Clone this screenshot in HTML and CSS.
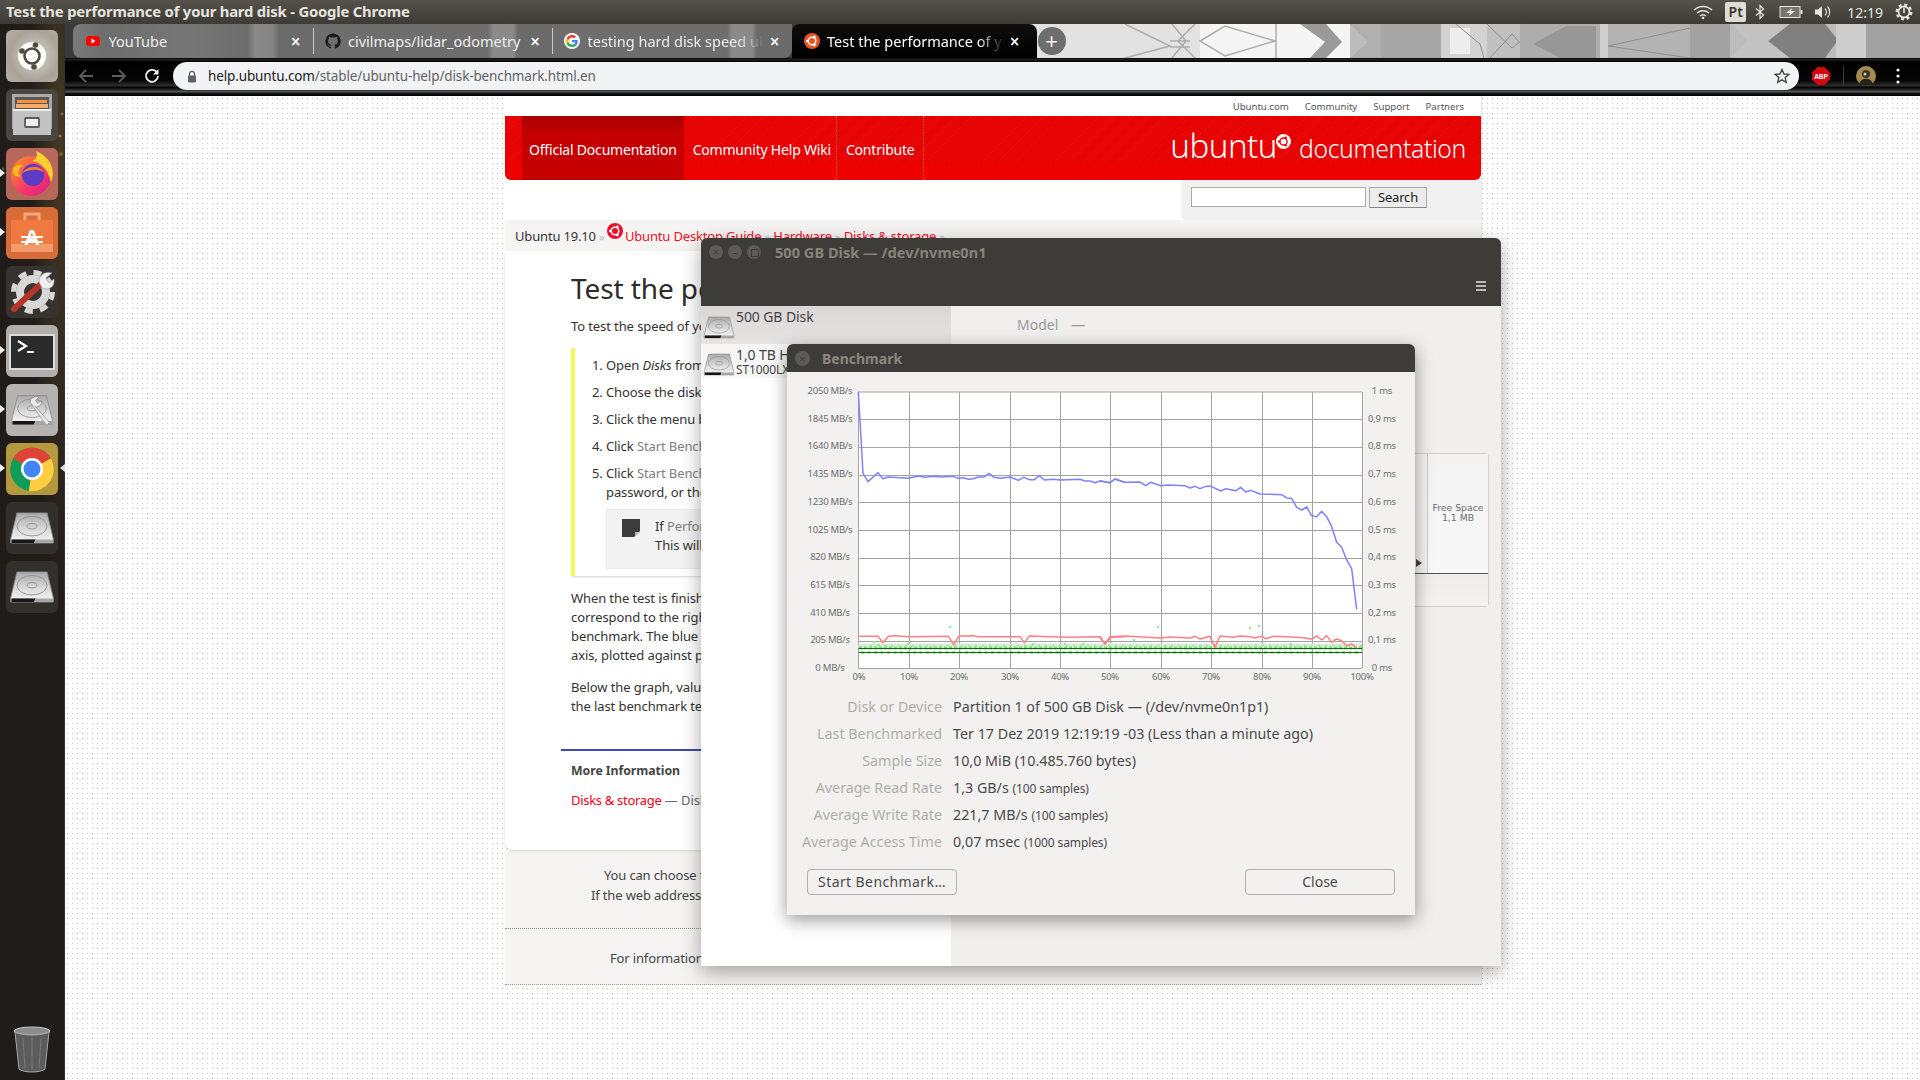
FILE: index.html
```
<!DOCTYPE html>
<html lang="en">
<head>
<meta charset="utf-8">
<title>Test the performance of your hard disk</title>
<link rel="stylesheet" href="styles.css">
</head>
<body>
<svg class="defs" width="0" height="0" aria-hidden="true">
  <defs>
    <linearGradient id="hddTop" x1="0" y1="0" x2="0" y2="1"><stop offset="0" stop-color="#a9a9a9"/><stop offset=".6" stop-color="#dedede"/><stop offset="1" stop-color="#f6f6f6"/></linearGradient>
    <linearGradient id="ffg" x1="0" y1="0" x2="1" y2="1"><stop offset="0" stop-color="#ff9a1f"/><stop offset=".6" stop-color="#f5366a"/><stop offset="1" stop-color="#d81b8c"/></linearGradient>
    <symbol id="hdd" viewBox="0 0 52 40">
      <path d="M9 3H43L50 32V37H2V32Z" fill="url(#hddTop)" stroke="#8a8a8a" stroke-width="1"/>
      <ellipse cx="26" cy="18" rx="17" ry="11" fill="none" stroke="#8f8f8f" stroke-width="1"/>
      <ellipse cx="26" cy="18" rx="5.500" ry="3" fill="none" stroke="#8f8f8f" stroke-width="1"/>
      <path d="M2 33H50V37H2Z" fill="#a6a6a6"/>
      <path d="M3 33H30L28 37H3Z" fill="#161616"/>
    </symbol>
    <symbol id="ubu" viewBox="0 0 52 52">
      <circle cx="26" cy="26" r="14" fill="#fbfbfa"/>
      <circle cx="26" cy="26" r="7.500" fill="none" stroke="#4f4a42" stroke-width="2.600"/>
      <g fill="#4f4a42"><circle cx="16" cy="21" r="2.800"/><circle cx="29.500" cy="15" r="2.800"/><circle cx="28" cy="37" r="2.800"/></g>
    </symbol>
  </defs>
</svg>
<div class="desktop">
  <header class="topbar">
    <span class="win-title">Test the performance of your hard disk - Google Chrome</span>
    <div class="tray">
      <svg class="t-wifi" width="20" height="16" viewBox="0 0 20 16"><g fill="none" stroke="#e6e4df" stroke-width="1.5"><path d="M1 6a13 13 0 0 1 18 0"/><path d="M4 9a9 9 0 0 1 12 0"/><path d="M7 12a4.5 4.5 0 0 1 6 0"/></g><circle cx="10" cy="14" r="1.3" fill="#e6e4df"/></svg>
      <span class="t-lang">Pt</span>
      <svg class="t-bt" width="10" height="16" viewBox="0 0 10 16"><path d="M1 4.500 8.500 11 5 14.500V1.500L8.500 5 1 11.500" fill="none" stroke="#e6e4df" stroke-width="1.200"/></svg>
      <svg class="t-bat" width="24" height="14" viewBox="0 0 24 14"><rect x="1" y="1.500" width="20" height="11" fill="#77746d" stroke="#e6e4df"/><rect x="21.500" y="5" width="2" height="4" fill="#e6e4df"/><path d="M13 3 7 8h4l-1 3 6-5h-4z" fill="#e6e4df"/></svg>
      <svg class="t-vol" width="18" height="16" viewBox="0 0 18 16"><path d="M1 5.500h3L8 2v12L4 10.500H1z" fill="#e6e4df"/><path d="M11 4.500a5 5 0 0 1 0 7M13.500 2.500a8 8 0 0 1 0 11" fill="none" stroke="#e6e4df" stroke-width="1.100"/></svg>
      <span class="t-clock">12:19</span>
      <svg class="t-gear" width="18" height="18" viewBox="0 0 18 18"><circle cx="9" cy="9" r="5.500" fill="none" stroke="#e6e4df" stroke-width="1.800"/><circle cx="9" cy="9" r="7.300" fill="none" stroke="#e6e4df" stroke-width="2.400" stroke-dasharray="3 2.730"/><path d="M9 5v5" stroke="#e6e4df" stroke-width="1.600"/></svg>
    </div>
  </header>

  <div class="workspace">
    <nav class="launcher">
      <div class="tile tile-dash"><svg width="52" height="52"><use href="#ubu"/></svg></div>
      <div class="tile tile-files"><svg width="52" height="52" viewBox="0 0 52 52"><path d="M6 5H46V40H6Z" fill="#a9a9a9"/><path d="M9 8H43V21H9Z" fill="#5d5750"/><path d="M11 11H41V14H11Z" fill="#f0923f"/><path d="M10 15H42V19H10Z" fill="#f2ab73"/><path d="M7 20H45V46H7Z" fill="#c2c2c2"/><path d="M7 20H45V22H7Z" fill="#efefef"/><rect x="19" y="29" width="14" height="9" rx="1" fill="#efefef" stroke="#5a5a5a" stroke-width="1.800"/></svg></div>
      <div class="tile tile-ff has-arrow"><svg width="52" height="52" viewBox="0 0 52 52"><circle cx="25" cy="28" r="20" fill="url(#ffg)"/><path d="M30 3C45 9 50 24 45 34 42 22 35 14 26 13 31 11 32 7 30 3Z" fill="#ffcf2e"/><path d="M7 21C10 16 14 16 18 18 12 19 11 25 15 29 8 29 6 25 7 21Z" fill="#ffb81f"/><circle cx="27" cy="27" r="11" fill="#5b3bc4"/><path d="M16 25C20 19 32 15 38 24 30 20 22 22 16 25Z" fill="#ff7a2b"/></svg></div>
      <div class="tile tile-soft has-arrow"><svg width="52" height="52" viewBox="0 0 52 52"><path d="M19 13V7H33V13" fill="none" stroke="#f6a77c" stroke-width="3"/><path d="M5 13H47V45H5Z" fill="#ee7a3f"/><path d="M5 37H47V45H5Z" fill="#f29a6a"/><text class="soft-a" x="26" y="38" text-anchor="middle">A</text><path d="M15 29H37V31H15ZM15 34H37V36H15Z" fill="#fff"/></svg></div>
      <div class="tile tile-tools"><svg width="52" height="52" viewBox="0 0 52 52"><circle cx="27" cy="26" r="13" fill="none" stroke="#d8d8d8" stroke-width="8"/><circle cx="27" cy="26" r="19.500" fill="none" stroke="#d8d8d8" stroke-width="5" stroke-dasharray="8 7.300"/><path d="M8 43 36 17" stroke="#b5352a" stroke-width="6" stroke-linecap="round"/><path d="M33 16C33 8 40 5 46 7L40 12 43 17 48 13C49 20 44 25 36 22Z" fill="#efefef" stroke="#999" stroke-width=".6"/></svg></div>
      <div class="tile tile-term has-arrow"><svg width="52" height="52" viewBox="0 0 52 52"><rect x="4" y="10" width="44" height="34" fill="#2a2a2a" stroke="#dcdcdc" stroke-width="2"/><path d="M12 16 20 21 12 26" fill="none" stroke="#fff" stroke-width="2.200"/><path d="M21 27H28" stroke="#fff" stroke-width="2"/></svg></div>
      <div class="tile tile-disks has-arrow"><svg width="44" height="36" viewBox="0 0 52 40"><use href="#hdd"/><path d="M24 11C23 6 30 3 34 5L30 9 33 12 37 9C38 14 34 17 30 16L47 35 43 38Z" fill="#e9e9e9" stroke="#777" stroke-width=".7"/></svg></div>
      <div class="tile tile-chrome has-arrow arrow-right"><svg width="52" height="52" viewBox="0 0 52 52"><path d="M26 26 7 15.500A22 22 0 0 1 45 15.500Z" fill="#db4437"/><path d="M26 26 7 15.500A22 22 0 0 0 23 48Z" fill="#0f9d58"/><path d="M26 26 45 15.500A22 22 0 0 1 23 48Z" fill="#ffcd40"/><circle cx="26" cy="26" r="11" fill="#fff"/><circle cx="26" cy="26" r="8.500" fill="#4285f4"/></svg></div>
      <div class="tile tile-hdd"><svg width="46" height="36" viewBox="0 0 52 40"><use href="#hdd"/></svg></div>
      <div class="tile tile-hdd"><svg width="46" height="36" viewBox="0 0 52 40"><use href="#hdd"/></svg></div>
      <div class="tile tile-trash"><svg width="46" height="50" viewBox="0 0 46 50"><ellipse cx="23" cy="7" rx="18" ry="4" fill="#8d8d8d" stroke="#ccc"/><path d="M6 8 10 45C14 49 32 49 36 45L40 8C34 12 12 12 6 8Z" fill="#5c5c5c" stroke="#a8a8a8"/><path d="M14 14 16 44M23 14V45M32 14 30 44" stroke="#7c7c7c"/></svg></div>
    </nav>

    <main class="browser">
      <div class="tabstrip">
        <svg class="strip-art" width="1855" height="34" viewBox="65 24 1855 34" aria-hidden="true">
          <rect x="1000" y="24" width="920" height="34" fill="#bcbcbc"/>
          <rect x="1000" y="24" width="200" height="34" fill="#e2e2e2"/>
          <rect x="1200" y="24" width="150" height="34" fill="#f5f5f5"/>
          <g fill="none" stroke="#adadad" stroke-width="1.500">
            <path d="M1125 24 1170 46 1125 58M1170 41H1190M1170 47H1190M1195 24 1178 41 1195 58M1172 24 1186 41 1172 58"/>
            <path d="M1200 41 1225 26 1275 41 1225 56ZM1276 24V58"/>
          </g>
          <path d="M1300 24H1326L1342 42 1326 58H1310L1325 42Z" fill="#9a9a9a"/>
          <path d="M1350 24H1381V58H1350L1368 42Z" fill="#b0b0b0"/>
          <rect x="1381" y="24" width="60" height="34" fill="#a6a6a6"/>
          <rect x="1441" y="24" width="46" height="34" fill="#d2d2d2"/>
          <rect x="1450" y="28" width="20" height="26" fill="#ededed"/>
          <rect x="1487" y="24" width="33" height="34" fill="#c0c0c0"/>
          <g fill="none" stroke="#8f8f8f" stroke-width="1"><path d="M1456 24 1480 44 1484 58M1487 24 1512 48 1530 34M1490 58 1512 34 1530 54"/></g>
          <rect x="1520" y="24" width="80" height="34" fill="#adadad"/>
          <path d="M1533 44 1566 26H1596V58H1560Z" fill="#979797"/>
          <rect x="1600" y="24" width="8" height="34" fill="#cfcfcf"/>
          <rect x="1608" y="24" width="82" height="34" fill="#b2b2b2"/>
          <path d="M1608 46 1690 28M1608 46 1690 58" fill="none" stroke="#8f8f8f" stroke-width="1"/>
          <rect x="1690" y="24" width="40" height="34" fill="#a2a2a2"/>
          <path d="M1730 24H1790L1768 41 1790 58H1730L1748 41Z" fill="#c2c2c2"/>
          <path d="M1790 24H1825L1838 40 1825 58H1790L1768 41Z" fill="#808080"/>
          <rect x="1836" y="24" width="30" height="34" fill="#cdcdcd"/>
          <rect x="1866" y="24" width="54" height="34" fill="#a2a2a2"/>
        </svg>
        <div class="tab">
          <svg class="favicon" width="16" height="16" viewBox="0 0 16 16"><rect x="1" y="3" width="14" height="10" rx="3" fill="#f00"/><path d="M6.500 5.500 10.500 8 6.500 10.500Z" fill="#fff"/></svg>
          <span class="tab-title">YouTube</span><span class="tab-x">×</span>
        </div>
        <div class="tab tab-sep">
          <svg class="favicon" width="16" height="16" viewBox="0 0 16 16"><path d="M8 .5A7.700 7.700 0 0 0 5.600 15.500c.4.100.5-.2.500-.4V13.700C4 14.200 3.500 12.800 3.500 12.800 3.100 11.900 2.600 11.700 2.600 11.700 1.900 11.200 2.700 11.200 2.700 11.200 3.500 11.300 3.900 12 3.900 12 4.600 13.200 5.700 12.900 6.100 12.700 6.200 12.200 6.400 11.900 6.600 11.700 4.900 11.500 3.100 10.900 3.100 7.900 3.100 7 3.400 6.300 3.900 5.800 3.800 5.600 3.600 4.800 4 3.700 4 3.700 4.700 3.500 6.100 4.500A7.400 7.400 0 0 1 9.900 4.500C11.400 3.500 12 3.700 12 3.700 12.400 4.800 12.200 5.600 12.100 5.800 12.600 6.300 12.900 7 12.900 7.900 12.900 10.900 11.100 11.500 9.400 11.700 9.700 11.900 9.900 12.400 9.900 13.100V15.100C9.900 15.300 10 15.600 10.500 15.500A7.700 7.700 0 0 0 8 .5Z" fill="#1b1b1b"/></svg>
          <span class="tab-title">civilmaps/lidar_odometry</span><span class="tab-x">×</span>
        </div>
        <div class="tab tab-sep tab-last">
          <svg class="favicon" width="16" height="16" viewBox="0 0 16 16"><circle cx="8" cy="8" r="8" fill="#fff"/><path d="M13.800 8.200c0-.5 0-.9-.1-1.300H8v2.400h3.300c-.1.800-.6 1.400-1.200 1.900v1.500h2c1.100-1.100 1.700-2.600 1.700-4.500Z" fill="#4285f4"/><path d="M8 14c1.600 0 3-.5 4-1.500l-2-1.500c-.5.400-1.200.6-2 .6-1.600 0-2.900-1-3.300-2.400H2.600v1.600A6 6 0 0 0 8 14Z" fill="#34a853"/><path d="M4.700 9.200a3.600 3.600 0 0 1 0-2.400V5.200H2.600a6 6 0 0 0 0 5.600Z" fill="#fbbc05"/><path d="M8 4.400c.9 0 1.700.3 2.300.9l1.800-1.800A6 6 0 0 0 2.600 5.200l2.100 1.600C5.100 5.400 6.400 4.400 8 4.400Z" fill="#ea4335"/></svg>
          <span class="tab-title tab-fade">testing hard disk speed ubuntu</span><span class="tab-x">×</span>
        </div>
        <div class="tab tab-active">
          <svg class="favicon" width="16" height="16" viewBox="0 0 16 16"><circle cx="8" cy="8" r="8" fill="#e95420"/><circle cx="8" cy="8" r="3.800" fill="none" stroke="#fff" stroke-width="1.500"/><g fill="#fff"><circle cx="3.300" cy="8" r="1.300"/><circle cx="10.400" cy="3.900" r="1.300"/><circle cx="10.400" cy="12.100" r="1.300"/></g></svg>
          <span class="tab-title tab-fade">Test the performance of your hard disk</span><span class="tab-x">×</span>
        </div>
        <span class="newtab">+</span>
      </div>

      <div class="toolbar">
        <div class="navbtns">
          <svg width="16" height="16" viewBox="0 0 16 16"><path d="M15 8H2M8 2 2 8l6 6" fill="none" stroke="#5c5c5c" stroke-width="1.800"/></svg>
          <svg width="16" height="16" viewBox="0 0 16 16"><path d="M1 8H14M8 2l6 6-6 6" fill="none" stroke="#5c5c5c" stroke-width="1.800"/></svg>
          <svg width="16" height="16" viewBox="0 0 16 16"><path d="M13.300 5A6 6 0 1 0 14 8" fill="none" stroke="#f2f2f2" stroke-width="1.800"/><path d="M14.500 1V6.500H9Z" fill="#f2f2f2"/></svg>
        </div>
        <div class="omnibox">
          <svg width="10" height="13" viewBox="0 0 10 13"><path d="M2.500 6V3.800a2.500 2.500 0 0 1 5 0V6" fill="none" stroke="#5f6368" stroke-width="1.300"/><rect x="1" y="5.500" width="8" height="7" rx="1" fill="#5f6368"/></svg>
          <span class="url"><b>help.ubuntu.com</b>/stable/ubuntu-help/disk-benchmark.html.en</span>
          <svg class="star" width="16" height="16" viewBox="0 0 16 16"><path d="M8 1.500 10 6l4.800.4-3.600 3.200 1.100 4.800L8 11.900l-4.300 2.500 1.100-4.800L1.200 6.400 6 6Z" fill="none" stroke="#444" stroke-width="1.400"/></svg>
        </div>
        <svg class="abp" width="18" height="18" viewBox="0 0 18 18"><path d="M5.500 0h7L18 5.500v7L12.500 18h-7L0 12.500v-7Z" fill="#d5070f"/><text class="abp-t" x="9" y="11.500" text-anchor="middle">ABP</text></svg>
        <span class="tool-sep"></span>
        <svg class="avatar" width="20" height="20" viewBox="0 0 20 20"><circle cx="10" cy="10" r="10" fill="#a58a4d"/><circle cx="10" cy="8" r="4" fill="#3a352a"/><path d="M3 18C5 11 15 11 17 18L10 20Z" fill="#26231c"/><circle cx="9" cy="8" r="1.500" fill="#cfc7a8"/></svg>
        <svg class="menu" width="4" height="16" viewBox="0 0 4 16"><circle cx="2" cy="2" r="1.600" fill="#f2f2f2"/><circle cx="2" cy="8" r="1.600" fill="#f2f2f2"/><circle cx="2" cy="14" r="1.600" fill="#f2f2f2"/></svg>
      </div>

      <div class="viewport">
        <div class="site">
          <ul class="site-top">
            <li>Ubuntu.com</li><li>Community</li><li>Support</li><li>Partners</li>
          </ul>
          <div class="site-head">
            <a class="hnav hnav-active">Official Documentation</a>
            <a class="hnav hnav-2">Community Help Wiki</a>
            <a class="hnav hnav-3">Contribute</a>
            <span class="brand"><span class="brand-u">ubuntu</span><svg class="brand-logo" width="15" height="15" viewBox="0 0 16 16"><circle cx="8" cy="8" r="8" fill="#fff"/><circle cx="8" cy="8" r="3.800" fill="none" stroke="#ee0000" stroke-width="1.500"/><g fill="#ee0000"><circle cx="3.300" cy="8" r="1.300"/><circle cx="10.400" cy="3.900" r="1.300"/><circle cx="10.400" cy="12.100" r="1.300"/></g></svg><span class="brand-d">documentation</span></span>
          </div>
          <div class="search-row">
            <div class="search-box"><span class="search-in"></span><span class="search-btn">Search</span></div>
          </div>
          <div class="crumbs">
            <span class="crumb-txt">Ubuntu 19.10 <i>»</i></span>
            <svg class="crumb-logo" width="16" height="16" viewBox="0 0 16 16"><circle cx="8" cy="8" r="8" fill="#e8102a"/><circle cx="8" cy="8" r="3.800" fill="none" stroke="#fff" stroke-width="1.500"/><g fill="#fff"><circle cx="3.300" cy="8" r="1.300"/><circle cx="10.400" cy="3.900" r="1.300"/><circle cx="10.400" cy="12.100" r="1.300"/></g></svg>
            <a>Ubuntu Desktop Guide</a> <i>»</i> <a>Hardware</a> <i>»</i> <a>Disks &amp; storage</a> <i>»</i>
          </div>
          <article class="content">
            <h1>Test the performance of your hard disk</h1>
            <p class="intro">To test the speed of your hard disk:</p>
            <ol class="steps">
              <li>Open <em>Disks</em> from the Activities overview.</li>
              <li>Choose the disk from the list in the left pane.</li>
              <li>Click the menu button and select Benchmark Disk… from the menu.</li>
              <li>Click <span class="gui">Start Benchmark…</span> and adjust the Transfer Rate and Access Time parameters as desired.</li>
              <li>Click <span class="gui">Start Benchmarking…</span> to test how fast data can be read from the disk. Administrative privileges may be required. Enter your<br>password, or the password for the requested administrator account.
                <div class="note">
                  <svg class="note-ic" width="18" height="18" viewBox="0 0 18 18"><path d="M0 0H18V12L12 18H0Z" fill="#3c3c3c"/><path d="M13 18V13H18Z" fill="#bbb"/></svg>
                  <p>If <span class="gui">Perform write-benchmark</span> is checked, the benchmark will test how fast data can be read from and written to the disk.<br>This will take longer to complete.</p>
                </div>
              </li>
            </ol>
            <p class="para">When the test is finished, the results will appear on the graph. The green points and connecting lines indicate the samples taken; these<br>correspond to the right axis, showing access time, plotted against the bottom axis, representing percentage time elapsed during the<br>benchmark. The blue line represents read rates, while the red line represents write rates; these are shown as access data rates on the left<br>axis, plotted against percentage disk traveled, from the outside to the spindle, along the bottom axis.</p>
            <p class="para para-2">Below the graph, values are displayed for minimum, maximum and average read and write rates, average access time and time elapsed since<br>the last benchmark test.</p>
            <hr class="rule">
            <h2>More Information</h2>
            <p class="more"><a>Disks &amp; storage</a> — Disk space, partitions and formatting</p>
          </article>
          <footer class="foot">
            <div class="foot-a"><p>You can choose the display language by adding a language suffix to the web address so it ends with e.g.</p><p class="foot-2">If the web address has no language suffix, the preferred language in your browser settings is used.</p></div>
            <div class="foot-b">For information on contributing see the Ubuntu Documentation Team wiki page.</div>
          </footer>
        </div>
      </div>
    </main>
  </div>

  <section class="win-disks">
    <div class="d-title">
      <div class="d-titlerow">
        <span class="wbtn">×</span><span class="wbtn">–</span><span class="wbtn wbtn-max"></span>
        <span class="d-name">500 GB Disk — /dev/nvme0n1</span>
      </div>
      <svg class="burger" width="10" height="10" viewBox="0 0 10 10"><path d="M0 1H10M0 5H10M0 9H10" stroke="#e6e4df" stroke-width="1.600"/></svg>
    </div>
    <div class="d-body">
      <aside class="d-side">
        <div class="drive drive-sel"><svg width="32" height="25" viewBox="0 0 52 40"><use href="#hdd"/></svg><span class="drive-n">500 GB Disk</span></div>
        <div class="drive drive-2"><svg width="32" height="25" viewBox="0 0 52 40"><use href="#hdd"/></svg><span class="drive-n">1,0 TB Hard Disk<small>ST1000LX015-1U7172</small></span></div>
      </aside>
      <div class="d-main">
        <div class="d-model"><span>Model</span><span>—</span></div>
        <div class="volumes">
          <div class="vol-top"><span class="vol-arrow"></span><div class="vol-free">Free Space<br>1,1 MB</div></div>
          <div class="vol-bot"></div>
        </div>
      </div>
    </div>
  </section>

  <section class="win-bench">
    <div class="b-title"><span class="wbtn wbtn-b">×</span><span class="b-name">Benchmark</span></div>
    <svg class="chart" width="628" height="318" viewBox="787 372 628 318">
      <rect x="858.500" y="392" width="503.500" height="276" fill="#fff"/>
      <g class="grid">
        <path d="M858.500 392H1362M858.500 419.500H1362M858.500 447.500H1362M858.500 475.500H1362M858.500 502.500H1362M858.500 530.500H1362M858.500 558.500H1362M858.500 585.500H1362M858.500 613.500H1362M858.500 641.500H1362M858.500 668.500H1362"/>
        <path d="M858.500 392V668M909.500 392V668M959.500 392V668M1010.500 392V668M1060.500 392V668M1110.500 392V668M1161.500 392V668M1211.500 392V668M1262.500 392V668M1312.500 392V668M1362.500 392V668"/>
      </g>
      <path class="green-haze" d="M858.500 646H1362"/>
      <g class="green-dots">
        <path d="M859 648H1362"/>
        <path class="gd2" d="M861 652.500H1362"/>
        <path class="gd3" d="M870 645.500H1362"/>
      </g>
      <g class="green-lines">
        <path d="M858.500 648.500H1362"/>
        <path d="M858.500 652.500H1362"/>
      </g>
      <g class="green-sc">
        <circle cx="950" cy="627" r="1.200"/><circle cx="874" cy="642" r="1.200"/><circle cx="879" cy="645" r="1.200"/><circle cx="908" cy="644" r="1.200"/><circle cx="1033" cy="644" r="1.200"/><circle cx="1065" cy="644" r="1.200"/><circle cx="1083" cy="644" r="1.200"/><circle cx="1134" cy="640" r="1.200"/><circle cx="1158" cy="627" r="1.200"/><circle cx="1250" cy="628" r="1.200"/><circle cx="1259" cy="626" r="1.200"/><circle cx="1291" cy="644" r="1.200"/><circle cx="1334" cy="640" r="1.200"/>
      </g>
      <g transform="translate(785 340) scale(.33333)">
        <polyline class="l-blue" points="220,155 234,400 249,425 279,398 294,416 310,411 370,415 400,408 420,412 445,409 470,411 505,409 520,415 535,413 550,418 565,416 580,411 597,411 612,400 627,412 645,415 676,411 700,421 716,412 733,419 748,419 763,407 778,420 805,418 825,420 885,418 900,423 915,423 930,428 945,423 975,428 990,417 1020,428"/>
        <polyline class="l-red" points="220,889 279,889 294,908 310,889 330,887 370,890 490,889 506,914 522,888 565,887 580,890 705,890 718,908 733,888 800,890 850,892 945,890 960,912 977,892 1020,890"/>
      </g>
      <g transform="translate(1100 340) scale(.33333)">
        <polyline class="l-blue" points="-1,422 30,428 45,417 75,427 120,426 137,437 152,427 182,437 205,435 255,437 270,444 285,439 300,446 318,439 333,439 362,453 378,446 408,452 422,442 437,456 452,451 480,462 545,464 560,474 575,475 590,502 605,510 620,501 635,527 650,530 665,514 680,530 695,560 710,607 725,622 740,660 755,686 770,808"/>
        <polyline class="l-red" points="-1,892 15,912 30,890 75,888 180,894 210,891 270,894 285,889 300,897 330,889 345,922 360,888 400,892 420,888 450,890 465,894 485,889 497,896 520,889 560,890 610,893 635,897 650,888 665,900 680,887 695,907 710,897 725,902 740,917 755,912 770,924"/>
      </g>
      <g class="ax" text-anchor="middle">
        <text x="830" y="394">2050 MB/s</text><text x="830" y="422">1845 MB/s</text><text x="830" y="449">1640 MB/s</text><text x="830" y="477">1435 MB/s</text><text x="830" y="505">1230 MB/s</text><text x="830" y="533">1025 MB/s</text><text x="830" y="560">820 MB/s</text><text x="830" y="588">615 MB/s</text><text x="830" y="616">410 MB/s</text><text x="830" y="643">205 MB/s</text><text x="830" y="671">0 MB/s</text>
        <text x="1382" y="394">1 ms</text><text x="1382" y="422">0,9 ms</text><text x="1382" y="449">0,8 ms</text><text x="1382" y="477">0,7 ms</text><text x="1382" y="505">0,6 ms</text><text x="1382" y="533">0,5 ms</text><text x="1382" y="560">0,4 ms</text><text x="1382" y="588">0,3 ms</text><text x="1382" y="616">0,2 ms</text><text x="1382" y="643">0,1 ms</text><text x="1382" y="671">0 ms</text>
        <text x="859" y="680">0%</text><text x="909" y="680">10%</text><text x="959" y="680">20%</text><text x="1010" y="680">30%</text><text x="1060" y="680">40%</text><text x="1110" y="680">50%</text><text x="1161" y="680">60%</text><text x="1211" y="680">70%</text><text x="1262" y="680">80%</text><text x="1312" y="680">90%</text><text x="1362" y="680">100%</text>
      </g>
    </svg>
    <dl class="info">
      <dt>Disk or Device</dt><dd>Partition 1 of 500 GB Disk — (/dev/nvme0n1p1)</dd>
      <dt>Last Benchmarked</dt><dd>Ter 17 Dez 2019 12:19:19 -03 (Less than a minute ago)</dd>
      <dt>Sample Size</dt><dd>10,0 MiB (10.485.760 bytes)</dd>
      <dt>Average Read Rate</dt><dd>1,3 GB/s <small>(100 samples)</small></dd>
      <dt>Average Write Rate</dt><dd>221,7 MB/s <small>(100 samples)</small></dd>
      <dt>Average Access Time</dt><dd>0,07 msec <small>(1000 samples)</small></dd>
    </dl>
    <div class="b-actions"><span class="btn btn-s">Start Benchmark…</span><span class="btn">Close</span></div>
  </section>
</div>
</body>
</html>
```

FILE: styles.css
```
* { box-sizing: border-box; }
html, body { margin: 0; padding: 0; }
body { font-family: "Noto Sans", "Open Sans", sans-serif; background: #fff; color: #333; }
.defs { position: absolute; }
.desktop { position: relative; width: 1920px; height: 1080px; overflow: hidden; display: flex; flex-direction: column; }

/* top panel */
.topbar { height: 24px; flex: none; display: flex; align-items: center; justify-content: space-between; padding-left: 6px; background: linear-gradient(#55524b, #3d3b35); color: #e6e4df; }
.win-title { font-size: 14.800px; font-weight: 700; letter-spacing: -.18px; white-space: nowrap; padding-bottom: 2px; }
.tray { display: flex; align-items: center; height: 24px; color: #e6e4df; }
.t-wifi { margin-right: 12px; }
.t-lang { width: 21px; height: 20px; background: #dfdcd4; color: #3c3a35; font-size: 14px; font-weight: 600; text-align: center; line-height: 20px; border-radius: 2px; margin-right: 9px; }
.t-bt { margin-right: 14px; }
.t-bat { margin-right: 11px; }
.t-vol { margin-right: 15px; }
.t-clock { font-size: 14px; margin-right: 12px; }
.t-gear { margin-right: 7px; }

.workspace { flex: 1; display: flex; min-height: 0; }

/* launcher */
.launcher { width: 65px; flex: none; padding: 6px 0 5px 6px; display: flex; flex-direction: column; gap: 7px; border-right: 1px solid #34312d;
  background:
    radial-gradient(circle at 62px 90px, #a88545 0, transparent 2px),
    radial-gradient(circle at 60px 112px, #c89a4f 0, transparent 2px),
    radial-gradient(circle at 3px 145px, #8a6d3a 0, transparent 2px),
    radial-gradient(circle at 61px 130px, #8f7240 0, transparent 3px),
    radial-gradient(ellipse at 60px 120px, rgba(110,85,45,.5) 0, transparent 30px),
    #1f1c1a; }
.tile { position: relative; width: 52px; height: 52px; border-radius: 6px; display: flex; align-items: center; justify-content: center; }
.tile-dash { background: radial-gradient(circle at 55% 50%, #dcd8d0, #a8a297 65%, #b6b0a6); }
.tile-files { background: #4a4743; }
.tile-ff { background: #b8685a; }
.tile-soft { background: #d86c38; }
.tile-tools { background: #37342f; }
.tile-term { background: #b1afac; }
.tile-disks { background: #b5b3b0; }
.tile-chrome { background: #b5993f; }
.tile-hdd { background: #33302c; }
.tile-trash { margin-top: auto; background: transparent; }
.has-arrow::before { content: ""; position: absolute; left: -6px; top: 21px; border-left: 5px solid #eee; border-top: 4px solid transparent; border-bottom: 4px solid transparent; }
.arrow-right::after { content: ""; position: absolute; right: -7px; top: 21px; border-right: 5px solid #ddd; border-top: 4px solid transparent; border-bottom: 4px solid transparent; }
.soft-a { font: 700 22px "Liberation Sans", sans-serif; fill: #fff; }

/* browser */
.browser { flex: 1; min-width: 0; display: flex; flex-direction: column; }
.tabstrip { height: 34px; flex: none; display: flex; align-items: stretch; padding-left: 8px; position: relative; background: #3a3a3a; }
.strip-art { position: absolute; left: 0; top: 0; filter: blur(.5px); }
.tab { width: 239.500px; flex: none; display: flex; align-items: center; padding: 0 10px 0 12px; position: relative; color: #eee;
  background: linear-gradient(90deg, #6e6e6e 0, #6e6e6e 175px, #8a8a8a 180px, #8a8a8a 200px, #6a6a6a 205px); }
.tab:first-of-type { border-radius: 8px 0 0 8px; background: linear-gradient(90deg, #7a7a7a 0, #6e6e6e 30px, #767676 120px, #6d6d6d 175px, #8a8a8a 182px, #848484 200px, #6b6b6b 206px); }
.tab-last { border-radius: 0 0 8px 0; }
.tab-sep::before { content: ""; position: absolute; left: 0; top: 4px; bottom: 4px; width: 1px; background: #c9c9c9; }
.tab-active { width: 245px; padding-right: 15px; border-radius: 8px 8px 0 0; color: #fff; background: linear-gradient(#0e0e0e, #000); }
.favicon { flex: none; margin-right: 7.500px; }
.tab-title { flex: 1; min-width: 0; font-size: 14.500px; white-space: nowrap; overflow: hidden; }
.tab-fade { -webkit-mask-image: linear-gradient(90deg, #000 85%, transparent 100%); mask-image: linear-gradient(90deg, #000 85%, transparent 100%); }
.tab-x { width: 14px; flex: none; margin-left: 4px; font-size: 17px; font-weight: 600; text-align: center; color: #fff; }
.newtab { width: 28px; height: 28px; margin: 3px 0 0 1px; position: relative; border-radius: 50%; background: #6e6e6e; color: #f5f5f5; text-align: center; font-size: 22px; line-height: 26px; }

.toolbar { height: 38px; flex: none; display: flex; align-items: center; padding-bottom: 2px;
  background: linear-gradient(#000 0, #222 4%, #000 10%, #050505 60%, #2e2e2e 72%, #000 78%, #3a3a3a 86%, #5a5a5a 89%, #111 93%, #000 100%); }
.navbtns { display: flex; gap: 17px; padding-left: 13px; }
.navbtns svg { flex: none; }
.omnibox { margin-left: 13px; width: 1626px; height: 28px; border-radius: 14px; background: #f1f3f4; display: flex; align-items: center; padding: 0 9px 0 14px; }
.url { flex: 1; margin-left: 11px; font-size: 13.500px; letter-spacing: -.13px; color: #5f6368; white-space: nowrap; }
.url b { font-weight: 400; color: #202124; }
.abp { margin-left: 13px; flex: none; }
.abp-t { font: 700 6.500px "Liberation Sans", sans-serif; fill: #fff; }
.tool-sep { width: 1px; height: 20px; background: #3a3a3a; margin-left: 13px; }
.avatar { margin-left: 12px; flex: none; }
.menu { margin-left: 20px; flex: none; }

/* page */
.viewport { flex: 1; min-height: 0; padding-left: 440px; background-color: #fff; background-image: radial-gradient(circle, #c4c4c4 .7px, transparent .9px); background-size: 5px 5px; overflow: hidden; }
.site { width: 977px; height: 889px; display: flex; flex-direction: column; border-right: 1px solid #e9e9e9; }
.site-top { list-style: none; margin: 0; height: 20px; padding: 0 17px 0 0; background: #fff; display: flex; justify-content: flex-end; gap: 16px; font-size: 9.600px; line-height: 21px; color: #555; }
.site-head { height: 64px; flex: none; display: flex; align-items: stretch; padding-left: 17px; color: #fff; border-radius: 0 0 6px 6px;
  background: linear-gradient(transparent 0, transparent 46px, #ee0000 46px), repeating-linear-gradient(135deg, #f00808 0 1px, #e30000 1px 3px); background-color: #ee0000; }
.hnav { display: flex; align-items: center; font-size: 14px; letter-spacing: -.2px; padding: 3px 7px 0; border-right: 1px dotted #f65a2a; white-space: nowrap; }
.hnav-2 { padding: 3px 5px 0 9px; }
.hnav-3 { padding: 3px 8px 0 9px; }
.hnav-active { background: linear-gradient(#a80000, #c60000 30%, #c60000); border-right: 0; }
.brand { margin-left: auto; padding: 7px 15px 0 0; display: flex; align-items: baseline; }
.brand-u { font-size: 33px; font-weight: 300; line-height: 46px; letter-spacing: -.5px; }
.brand-logo { align-self: flex-start; margin: 11px 0 0 -1px; }
.brand-d { font-size: 24.700px; font-weight: 300; letter-spacing: -.33px; margin-left: 8px; }
.search-row { height: 40px; flex: none; display: flex; justify-content: flex-end; background: #fff; }
.search-box { width: 300px; background: #f1f1f1; border-radius: 0 0 0 5px; padding: 7px 0 0 10px; display: flex; gap: 3px; align-items: flex-start; }
.search-in { width: 175px; height: 20px; background: #fff; border: 1px solid #aaa; }
.search-btn { width: 58px; height: 21px; background: #ececec; border: 1px solid #aaa; border-bottom-color: #888; font-size: 13px; line-height: 18px; text-align: center; color: #222; letter-spacing: -.2px; border-radius: 1px; }
.crumbs { height: 31px; flex: none; background: #f5f4f2; padding: 6px 0 0 10px; font-size: 13px; line-height: 19px; white-space: nowrap; color: #333; letter-spacing: -.17px; }
.crumbs i { color: #bbb; font-style: normal; font-size: 11px; }
.crumbs a { color: #e8102a; }
.crumb-logo { vertical-align: -1px; margin: 0 -1px 0 -1px; position: relative; top: -3px; }
.content { height: 599px; flex: none; background: #fff; border-radius: 0 0 8px 8px; padding: 16px 0 0 66px; font-size: 13px; line-height: 19px; letter-spacing: -.1px; color: #333; white-space: nowrap; overflow: hidden; box-shadow: 0 1px 3px rgba(0,0,0,.12); position: relative; }
.content h1 { margin: 0; font-size: 28px; line-height: 42px; font-weight: 400; color: #2c2c2c; letter-spacing: -.1px; }
.content p { margin: 0; }
.content .intro { margin-top: 8px; }
.steps { margin: 12px 0 0; padding: 7.500px 0 7px 31px; border-left: 4px solid #f2f85b; box-shadow: 0 2px 2px -1px rgba(0,0,0,.18); }
.steps li { margin-bottom: 8px; }
.steps li:last-child { margin-bottom: 0; }
.gui { color: #808080; }
.note { margin-top: 7px; height: 60px; width: 700px; background: #f3f3f3; border: 1px solid #eaeaea; display: flex; padding: 7px 0 0 15px; }
.note-ic { flex: none; margin: 2px 15px 0 0; }
.content .para { margin-top: 13px; }
.content .para-2 { margin-top: 13px; }
.rule { margin: 33px 0 0 -10px; height: 2px; border: 0; background: #3a49b5; }
.content h2 { margin: 10.500px 0 0; font-size: 12.300px; line-height: 19px; font-weight: 700; color: #444; letter-spacing: -.05px; }
.content .more { margin-top: 11px; color: #666; }
.more a { color: #f00020; letter-spacing: -.3px; }
.foot { flex: none; height: 135px; background: #f5f4f2; font-size: 13px; line-height: 20px; letter-spacing: -.15px; color: #444; white-space: nowrap; border-bottom: 1px dotted #999; }
.foot-a { height: 79px; padding: 15px 0 0 99px; border-bottom: 1px dotted #888; }
.foot-a p { margin: 0; }
.foot-a .foot-2 { margin-left: -13px; }
.foot-b { padding: 19px 0 0 105px; }

/* disks window */
.win-disks { position: absolute; left: 701px; top: 238px; width: 800px; height: 728px; display: flex; flex-direction: column; box-shadow: 0 6px 20px rgba(0,0,0,.35); border-radius: 6px 6px 0 0; background: #f0efed; }
.d-title { height: 68px; flex: none; background: #3e3c38; border-radius: 6px 6px 0 0; position: relative; padding: 3px 0 0 8px; }
.d-titlerow { display: flex; align-items: center; gap: 5px; }
.wbtn { width: 14px; height: 14px; border-radius: 50%; background: #5c5a55; color: #3e3c38; font-size: 11px; line-height: 14px; text-align: center; flex: none; margin-top: 2px; }
.wbtn-max::after { content: ""; display: block; width: 6px; height: 6px; border: 1px solid #3e3c38; margin: 4px; }
.d-name { margin-left: 9px; font-size: 14.600px; font-weight: 700; color: #86837c; line-height: 18px; margin-top: 2px; }
.burger { position: absolute; right: 15px; top: 43px; }
.d-body { flex: 1; display: flex; min-height: 0; }
.d-side { width: 250px; flex: none; background: #fff; }
.drive { display: flex; align-items: flex-start; font-size: 14px; line-height: 17px; color: #444; padding: 2px 0 0 2px; letter-spacing: -.1px; white-space: nowrap; }
.drive svg { flex: none; margin: 7px 1px 0 0; }
.drive-sel { height: 38px; background: linear-gradient(#d9d7d5, #e6e4e2); }
.drive-2 { height: 34px; background: #f6f6f6; padding-top: 1px; }
.drive-2 svg { margin-top: 7px; }
.drive-n small { display: block; font-size: 12px; line-height: 13px; }
.drive-2 .drive-n { margin-top: 1px; }
.d-main { flex: 1; min-width: 0; padding: 10px 12px 0 66px; display: flex; flex-direction: column; background: #f0efed; }
.d-model { height: 18px; display: flex; gap: 13px; font-size: 14px; line-height: 18px; color: #999; }
.volumes { margin: 119px 0 0 auto; width: 300px; height: 154px; border: 1px solid #d2d0cd; border-radius: 4px; display: flex; flex-direction: column; background: #f4f3f2; }
.vol-top { height: 120px; flex: none; border-bottom: 1.500px solid #555; position: relative; }
.vol-free { position: absolute; right: 0; top: 0; bottom: 0; width: 61px; border-left: 1px solid #ccc; background: linear-gradient(#f3f3f3, #f8f8f8); font-family: "DejaVu Sans", sans-serif; font-size: 9.300px; line-height: 10px; text-align: center; color: #6d6d6d; padding-top: 49px; white-space: nowrap; }
.vol-arrow { position: absolute; right: 66px; bottom: 6px; border-left: 6px solid #444; border-top: 4px solid transparent; border-bottom: 4px solid transparent; }
.vol-bot { flex: 1; background: linear-gradient(#eeedec, #f4f3f2); }

/* benchmark dialog */
.win-bench { position: absolute; left: 787px; top: 344px; width: 628px; height: 571px; display: flex; flex-direction: column; background: #f2f1f0; border-radius: 6px 6px 0 0; box-shadow: 0 5px 18px rgba(0,0,0,.4); }
.b-title { height: 28px; flex: none; display: flex; align-items: center; background: #3e3c38; border-radius: 6px 6px 0 0; padding-left: 8px; }
.wbtn-b { margin-top: 0; width: 15px; height: 15px; line-height: 15px; }
.b-name { margin-left: 12px; font-size: 14px; font-weight: 700; color: #8b8780; }
.chart { display: block; flex: none; }
.grid path { fill: none; stroke: #a3a3a3; stroke-width: 1; }
.green-haze { fill: none; stroke: #dfe9df; stroke-width: 5; }
.green-lines path { fill: none; stroke: #1e5c1e; stroke-width: 1; }
.green-dots path { fill: none; stroke: #66ea66; stroke-width: 3; stroke-dasharray: 3 2; }
.green-dots .gd2 { stroke-width: 2.500; stroke-dasharray: 3 3.500; }
.green-dots .gd3 { stroke-width: 1.500; stroke-dasharray: 2 5; opacity: .6; }
.green-sc circle { fill: #8af08a; }
.l-blue { fill: none; stroke: #8080ff; stroke-width: 4.500; stroke-linejoin: round; }
.l-red { fill: none; stroke: #ff8080; stroke-width: 4.500; stroke-linejoin: round; }
.ax text { font-size: 9.500px; fill: #6c6c6c; letter-spacing: -.25px; }
.info { margin: 2.500px 0 0; display: grid; grid-template-columns: 155px 1fr; column-gap: 11px; grid-auto-rows: 27px; font-size: 14.300px; line-height: 27px; white-space: nowrap; }
.info dt { text-align: right; color: #b3ada6; }
.info dd { margin: 0; color: #4a4a4a; }
.info small { font-size: 12px; letter-spacing: -.1px; }
.b-actions { margin-top: 14.500px; display: flex; justify-content: space-between; padding: 0 20px; }
.btn { width: 150px; height: 26px; border: 1px solid #b5b1ab; border-radius: 4px; background: #f2f1f0; font-size: 14px; line-height: 24px; text-align: center; color: #4a4a4a; }
.btn-s { letter-spacing: .4px; }
```
